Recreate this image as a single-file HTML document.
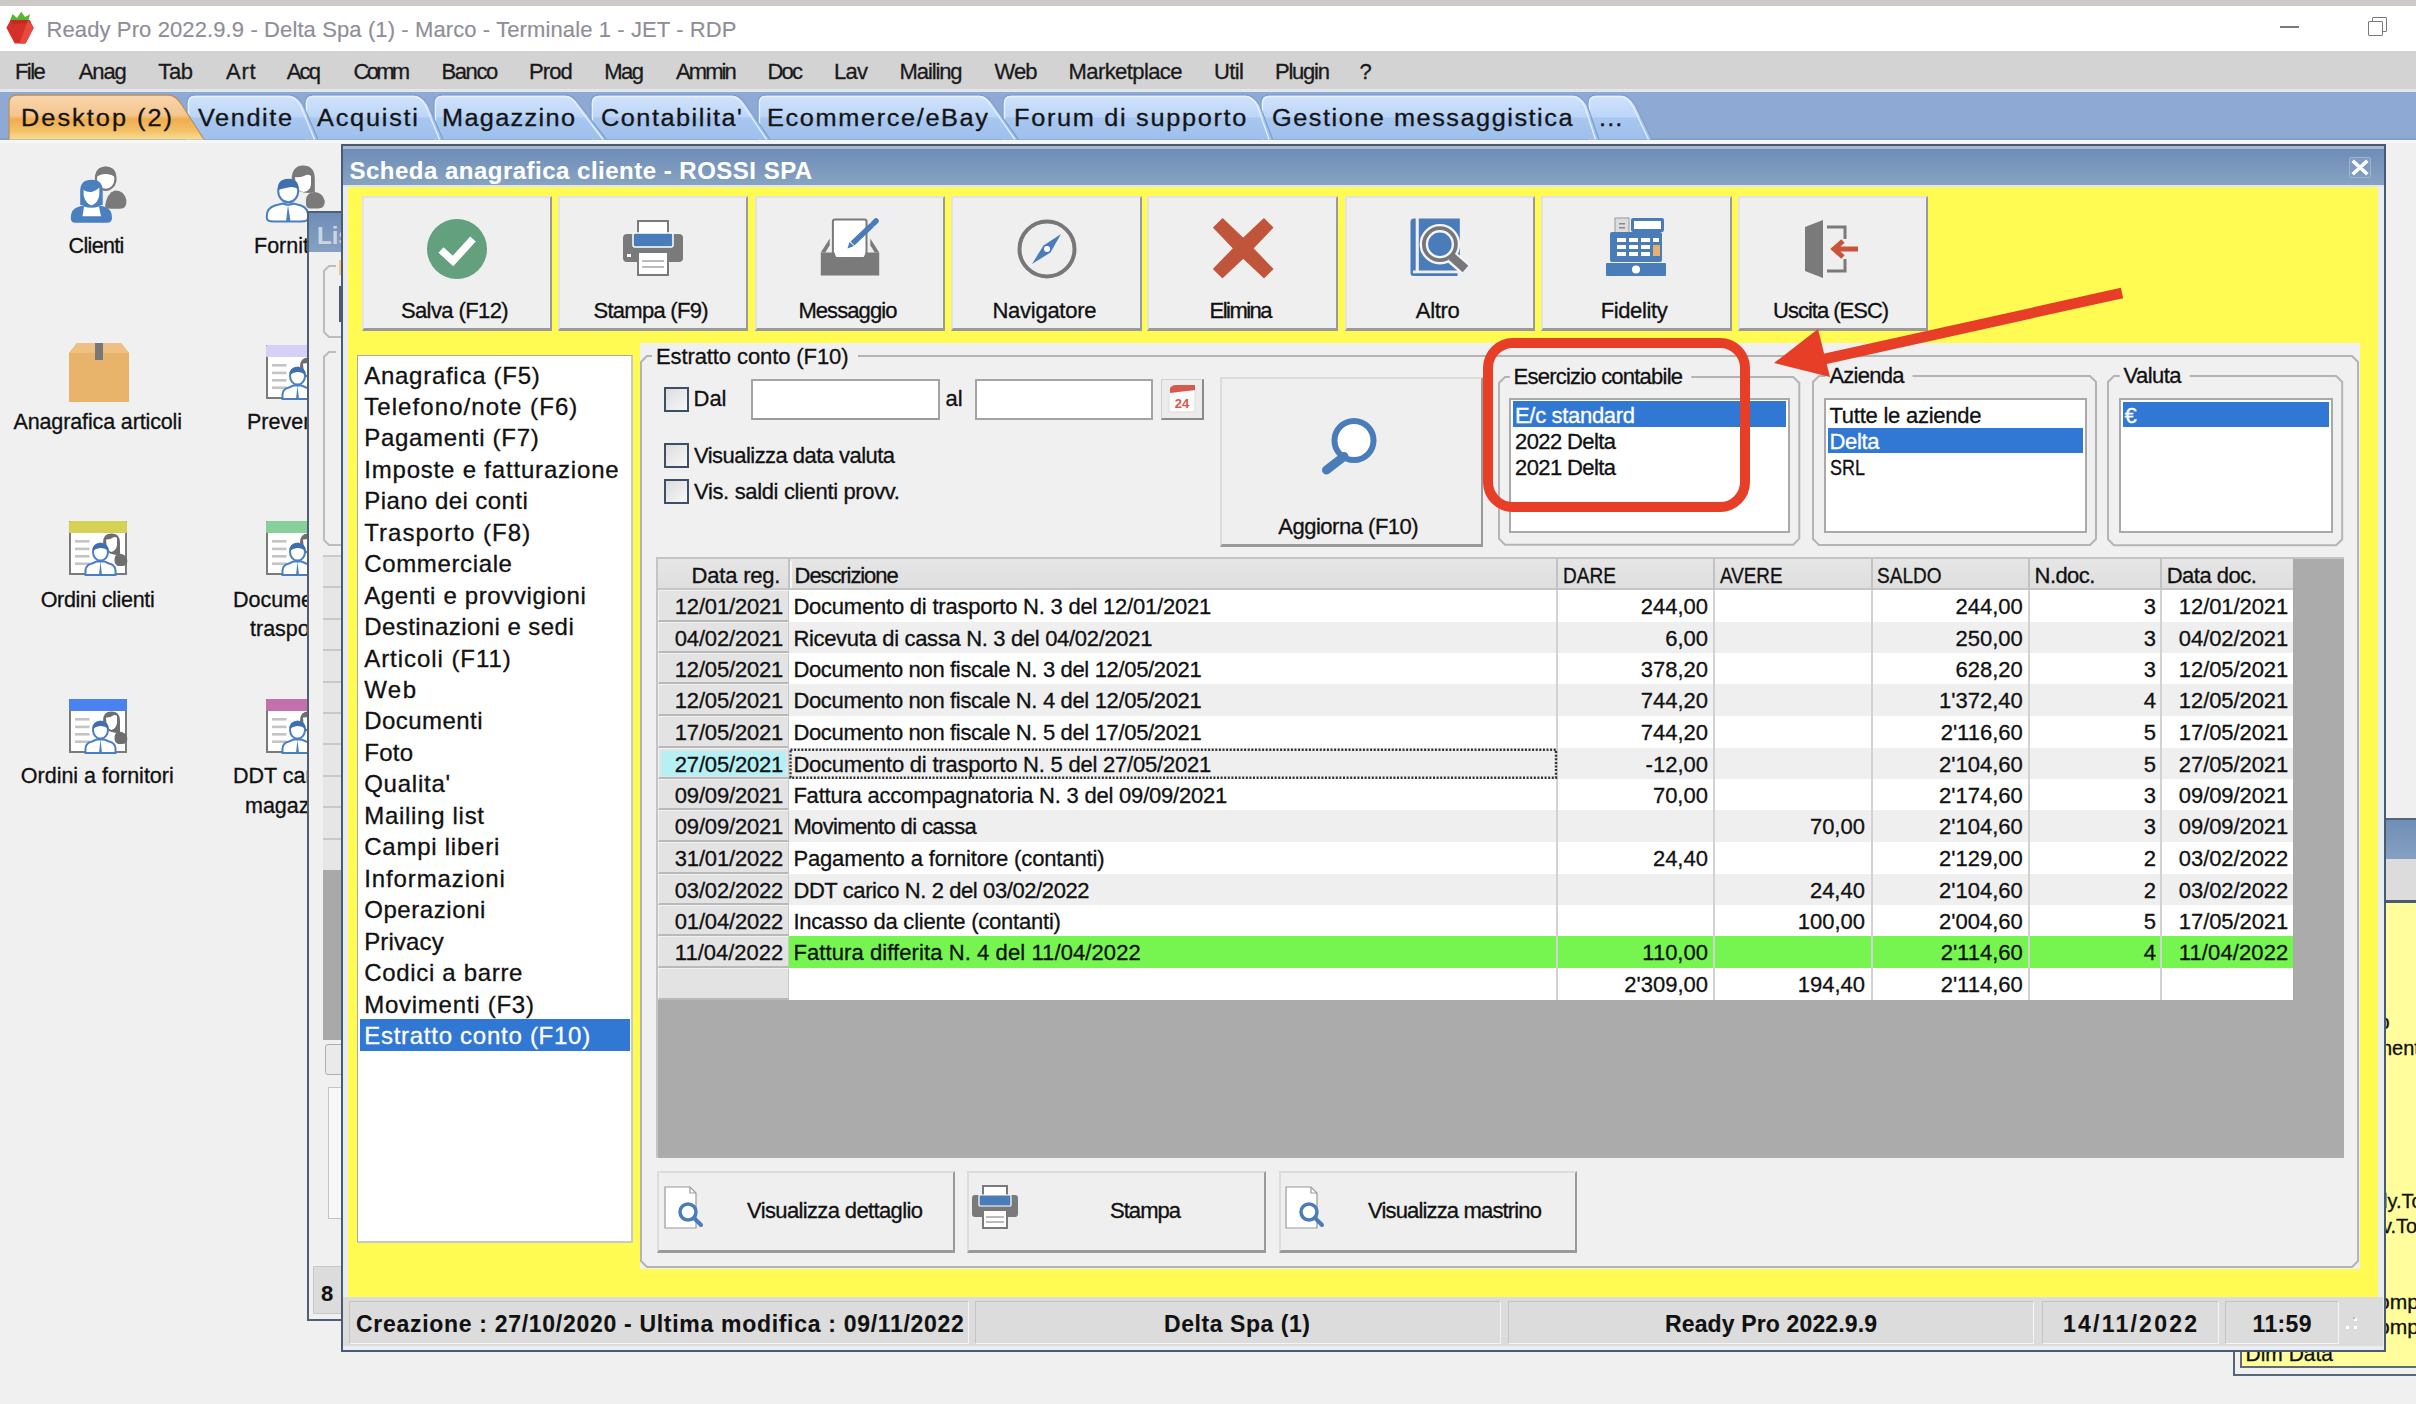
<!DOCTYPE html>
<html><head><meta charset="utf-8"><title>Ready Pro</title>
<style>
html,body{margin:0;padding:0;}
body{width:2416px;height:1404px;position:relative;overflow:hidden;background:#f0f0f0;font-family:'Liberation Sans', sans-serif;}
div{position:absolute;box-sizing:border-box;}
.t{white-space:pre;-webkit-text-stroke:0.3px currentColor;}
svg{overflow:visible;}
</style></head><body>
<div style="left:0.0px;top:0.0px;width:2416.0px;height:6.0px;background:#cdc9c6;"></div>
<div style="left:0.0px;top:6.0px;width:2416.0px;height:45.0px;background:#ffffff;"></div>
<svg style="position:absolute;left:0.0px;top:0.0px;" width="40" height="50" viewBox="0 0 40 50">
<path d="M10 20.5 L12.5 14 L17 18 L21.2 11.8 L25 17 L30 14.3 L28.5 20.5 Z" fill="#58b332"/>
<path d="M10.6 20 L29.5 20 L33.7 27.8 L25.6 43.5 L14.7 43.5 L6.4 27.8 Z" fill="#d6302a"/>
<path d="M10.6 20 L29.5 20 L31 23 L12 24 Z" fill="#c02a22"/>
<path d="M28 20 L33.7 27.8 L25.6 43.5 L19.5 43.5 Z" fill="#e84a40"/>
</svg>
<div class="t" style="left:46.5px;top:18.9px;font-size:22px;line-height:22px;color:#8e8e98;letter-spacing:0.11px;-webkit-text-stroke:0.15px currentColor;">Ready Pro 2022.9.9 - Delta Spa (1) - Marco - Terminale 1 - JET - RDP</div>
<div style="left:2280.0px;top:26.0px;width:19.0px;height:2.0px;background:#7a7a7a;"></div>
<div style="left:2372.0px;top:16.5px;width:15.0px;height:15.0px;border:1.5px solid #7a7a7a;border-radius:1px;"></div>
<div style="left:2367.5px;top:20.5px;width:15.5px;height:15.0px;border:1.5px solid #7a7a7a;background:#fff;border-radius:1px;"></div>
<div style="left:0.0px;top:51.0px;width:2416.0px;height:38.0px;background:#d3d3d3;"></div>
<div style="left:0.0px;top:89.0px;width:2416.0px;height:2.5px;background:#e2e6ee;"></div>
<div class="t" style="left:15.0px;top:60.9px;font-size:22px;line-height:22px;color:#1a1a1a;letter-spacing:-1.58px;">File</div>
<div class="t" style="left:78.8px;top:60.9px;font-size:22px;line-height:22px;color:#1a1a1a;letter-spacing:-1.13px;">Anag</div>
<div class="t" style="left:158.3px;top:60.9px;font-size:22px;line-height:22px;color:#1a1a1a;letter-spacing:-0.39px;">Tab</div>
<div class="t" style="left:226.0px;top:60.9px;font-size:22px;line-height:22px;color:#1a1a1a;letter-spacing:0.74px;">Art</div>
<div class="t" style="left:286.8px;top:60.9px;font-size:22px;line-height:22px;color:#1a1a1a;letter-spacing:-1.85px;">Acq</div>
<div class="t" style="left:353.6px;top:60.9px;font-size:22px;line-height:22px;color:#1a1a1a;letter-spacing:-2.79px;">Comm</div>
<div class="t" style="left:441.4px;top:60.9px;font-size:22px;line-height:22px;color:#1a1a1a;letter-spacing:-1.37px;">Banco</div>
<div class="t" style="left:529.0px;top:60.9px;font-size:22px;line-height:22px;color:#1a1a1a;letter-spacing:-0.89px;">Prod</div>
<div class="t" style="left:604.3px;top:60.9px;font-size:22px;line-height:22px;color:#1a1a1a;letter-spacing:-1.55px;">Mag</div>
<div class="t" style="left:676.0px;top:60.9px;font-size:22px;line-height:22px;color:#1a1a1a;letter-spacing:-1.91px;">Ammin</div>
<div class="t" style="left:767.5px;top:60.9px;font-size:22px;line-height:22px;color:#1a1a1a;letter-spacing:-1.81px;">Doc</div>
<div class="t" style="left:834.0px;top:60.9px;font-size:22px;line-height:22px;color:#1a1a1a;letter-spacing:-0.74px;">Lav</div>
<div class="t" style="left:899.6px;top:60.9px;font-size:22px;line-height:22px;color:#1a1a1a;letter-spacing:-1.12px;">Mailing</div>
<div class="t" style="left:994.6px;top:60.9px;font-size:22px;line-height:22px;color:#1a1a1a;letter-spacing:-0.97px;">Web</div>
<div class="t" style="left:1068.5px;top:60.9px;font-size:22px;line-height:22px;color:#1a1a1a;letter-spacing:-0.58px;">Marketplace</div>
<div class="t" style="left:1214.0px;top:60.9px;font-size:22px;line-height:22px;color:#1a1a1a;letter-spacing:-0.59px;">Util</div>
<div class="t" style="left:1275.0px;top:60.9px;font-size:22px;line-height:22px;color:#1a1a1a;letter-spacing:-1.23px;">Plugin</div>
<div class="t" style="left:1359.5px;top:60.9px;font-size:22px;line-height:22px;color:#1a1a1a;">?</div>
<div style="left:0.0px;top:91.5px;width:2416.0px;height:47.0px;background:#8eaad4;"></div>
<div style="left:0.0px;top:137.5px;width:2416.0px;height:2.0px;background:#7d9fd0;"></div>
<div style="left:0.0px;top:139.5px;width:2416.0px;height:3.0px;background:#f4f6fa;"></div>
<svg style="position:absolute;left:1588.0px;top:94.5px;" width="66" height="44.5" viewBox="0 0 66 44.5"><defs><linearGradient id="g1588" x1="0" y1="0" x2="0" y2="1"><stop offset="0" stop-color="#d2e3fb"/><stop offset="0.48" stop-color="#bdd6f8"/><stop offset="0.52" stop-color="#a8c7f0"/><stop offset="1" stop-color="#9ec0ec"/></linearGradient></defs><path d="M0 44.5 L0 8 Q0 0 8 0 L33.0 0 Q41.0 0 47.0 10 L64.0 44.5 Z" fill="url(#g1588)"/><path d="M0 44.5 L0 8 Q0 0 8 0 L33.0 0 Q41.0 0 47.0 10 L64.0 44.5" fill="none" stroke="#7f9fcc" stroke-width="1.3"/><path d="M1.5 44.5 L1.5 8 Q1.5 1.5 8 1.5 L33.0 1.5 Q39.0 1.5 44.5 10.5 L60.5 44.5" fill="none" stroke="#e6f0fd" stroke-width="1.3"/></svg>
<svg style="position:absolute;left:1261.0px;top:94.5px;" width="340" height="44.5" viewBox="0 0 340 44.5"><defs><linearGradient id="g1261" x1="0" y1="0" x2="0" y2="1"><stop offset="0" stop-color="#d2e3fb"/><stop offset="0.48" stop-color="#bdd6f8"/><stop offset="0.52" stop-color="#a8c7f0"/><stop offset="1" stop-color="#9ec0ec"/></linearGradient></defs><path d="M0 44.5 L0 8 Q0 0 8 0 L312.0 0 Q320.0 0 326.0 10 L338.0 44.5 Z" fill="url(#g1261)"/><path d="M0 44.5 L0 8 Q0 0 8 0 L312.0 0 Q320.0 0 326.0 10 L338.0 44.5" fill="none" stroke="#7f9fcc" stroke-width="1.3"/><path d="M1.5 44.5 L1.5 8 Q1.5 1.5 8 1.5 L312.0 1.5 Q318.0 1.5 323.5 10.5 L334.5 44.5" fill="none" stroke="#e6f0fd" stroke-width="1.3"/></svg>
<svg style="position:absolute;left:1003.4px;top:94.5px;" width="271.6" height="44.5" viewBox="0 0 271.6 44.5"><defs><linearGradient id="g1003" x1="0" y1="0" x2="0" y2="1"><stop offset="0" stop-color="#d2e3fb"/><stop offset="0.48" stop-color="#bdd6f8"/><stop offset="0.52" stop-color="#a8c7f0"/><stop offset="1" stop-color="#9ec0ec"/></linearGradient></defs><path d="M0 44.5 L0 8 Q0 0 8 0 L242.6 0 Q250.6 0 256.6 10 L269.6 44.5 Z" fill="url(#g1003)"/><path d="M0 44.5 L0 8 Q0 0 8 0 L242.6 0 Q250.6 0 256.6 10 L269.6 44.5" fill="none" stroke="#7f9fcc" stroke-width="1.3"/><path d="M1.5 44.5 L1.5 8 Q1.5 1.5 8 1.5 L242.6 1.5 Q248.6 1.5 254.1 10.5 L266.1 44.5" fill="none" stroke="#e6f0fd" stroke-width="1.3"/></svg>
<svg style="position:absolute;left:757.6px;top:94.5px;" width="262.4" height="44.5" viewBox="0 0 262.4 44.5"><defs><linearGradient id="g757" x1="0" y1="0" x2="0" y2="1"><stop offset="0" stop-color="#d2e3fb"/><stop offset="0.48" stop-color="#bdd6f8"/><stop offset="0.52" stop-color="#a8c7f0"/><stop offset="1" stop-color="#9ec0ec"/></linearGradient></defs><path d="M0 44.5 L0 8 Q0 0 8 0 L221.4 0 Q229.4 0 235.4 10 L260.4 44.5 Z" fill="url(#g757)"/><path d="M0 44.5 L0 8 Q0 0 8 0 L221.4 0 Q229.4 0 235.4 10 L260.4 44.5" fill="none" stroke="#7f9fcc" stroke-width="1.3"/><path d="M1.5 44.5 L1.5 8 Q1.5 1.5 8 1.5 L221.4 1.5 Q227.4 1.5 232.9 10.5 L256.9 44.5" fill="none" stroke="#e6f0fd" stroke-width="1.3"/></svg>
<svg style="position:absolute;left:591.0px;top:94.5px;" width="181" height="44.5" viewBox="0 0 181 44.5"><defs><linearGradient id="g591" x1="0" y1="0" x2="0" y2="1"><stop offset="0" stop-color="#d2e3fb"/><stop offset="0.48" stop-color="#bdd6f8"/><stop offset="0.52" stop-color="#a8c7f0"/><stop offset="1" stop-color="#9ec0ec"/></linearGradient></defs><path d="M0 44.5 L0 8 Q0 0 8 0 L141.0 0 Q149.0 0 155.0 10 L179.0 44.5 Z" fill="url(#g591)"/><path d="M0 44.5 L0 8 Q0 0 8 0 L141.0 0 Q149.0 0 155.0 10 L179.0 44.5" fill="none" stroke="#7f9fcc" stroke-width="1.3"/><path d="M1.5 44.5 L1.5 8 Q1.5 1.5 8 1.5 L141.0 1.5 Q147.0 1.5 152.5 10.5 L175.5 44.5" fill="none" stroke="#e6f0fd" stroke-width="1.3"/></svg>
<svg style="position:absolute;left:433.5px;top:94.5px;" width="174.5" height="44.5" viewBox="0 0 174.5 44.5"><defs><linearGradient id="g433" x1="0" y1="0" x2="0" y2="1"><stop offset="0" stop-color="#d2e3fb"/><stop offset="0.48" stop-color="#bdd6f8"/><stop offset="0.52" stop-color="#a8c7f0"/><stop offset="1" stop-color="#9ec0ec"/></linearGradient></defs><path d="M0 44.5 L0 8 Q0 0 8 0 L131.5 0 Q139.5 0 145.5 10 L172.5 44.5 Z" fill="url(#g433)"/><path d="M0 44.5 L0 8 Q0 0 8 0 L131.5 0 Q139.5 0 145.5 10 L172.5 44.5" fill="none" stroke="#7f9fcc" stroke-width="1.3"/><path d="M1.5 44.5 L1.5 8 Q1.5 1.5 8 1.5 L131.5 1.5 Q137.5 1.5 143.0 10.5 L169.0 44.5" fill="none" stroke="#e6f0fd" stroke-width="1.3"/></svg>
<svg style="position:absolute;left:305.0px;top:94.5px;" width="140" height="44.5" viewBox="0 0 140 44.5"><defs><linearGradient id="g305" x1="0" y1="0" x2="0" y2="1"><stop offset="0" stop-color="#d2e3fb"/><stop offset="0.48" stop-color="#bdd6f8"/><stop offset="0.52" stop-color="#a8c7f0"/><stop offset="1" stop-color="#9ec0ec"/></linearGradient></defs><path d="M0 44.5 L0 8 Q0 0 8 0 L109.0 0 Q117.0 0 123.0 10 L138.0 44.5 Z" fill="url(#g305)"/><path d="M0 44.5 L0 8 Q0 0 8 0 L109.0 0 Q117.0 0 123.0 10 L138.0 44.5" fill="none" stroke="#7f9fcc" stroke-width="1.3"/><path d="M1.5 44.5 L1.5 8 Q1.5 1.5 8 1.5 L109.0 1.5 Q115.0 1.5 120.5 10.5 L134.5 44.5" fill="none" stroke="#e6f0fd" stroke-width="1.3"/></svg>
<svg style="position:absolute;left:187.0px;top:94.5px;" width="133" height="44.5" viewBox="0 0 133 44.5"><defs><linearGradient id="g187" x1="0" y1="0" x2="0" y2="1"><stop offset="0" stop-color="#d2e3fb"/><stop offset="0.48" stop-color="#bdd6f8"/><stop offset="0.52" stop-color="#a8c7f0"/><stop offset="1" stop-color="#9ec0ec"/></linearGradient></defs><path d="M0 44.5 L0 8 Q0 0 8 0 L102.0 0 Q110.0 0 116.0 10 L131.0 44.5 Z" fill="url(#g187)"/><path d="M0 44.5 L0 8 Q0 0 8 0 L102.0 0 Q110.0 0 116.0 10 L131.0 44.5" fill="none" stroke="#7f9fcc" stroke-width="1.3"/><path d="M1.5 44.5 L1.5 8 Q1.5 1.5 8 1.5 L102.0 1.5 Q108.0 1.5 113.5 10.5 L127.5 44.5" fill="none" stroke="#e6f0fd" stroke-width="1.3"/></svg>
<svg style="position:absolute;left:9.0px;top:94.5px;" width="197" height="44.5" viewBox="0 0 197 44.5"><defs><linearGradient id="g9" x1="0" y1="0" x2="0" y2="1"><stop offset="0" stop-color="#f8d6ac"/><stop offset="0.45" stop-color="#f5c690"/><stop offset="0.55" stop-color="#f0ad50"/><stop offset="0.8" stop-color="#f3c068"/><stop offset="1" stop-color="#f9dd90"/></linearGradient></defs><path d="M0 44.5 L0 8 Q0 0 8 0 L159.0 0 Q167.0 0 173.0 10 L195.0 44.5 Z" fill="url(#g9)"/><path d="M0 44.5 L0 8 Q0 0 8 0 L159.0 0 Q167.0 0 173.0 10 L195.0 44.5" fill="none" stroke="#b89060" stroke-width="1.3"/></svg>
<div class="t" style="left:21.0px;top:107.0px;font-size:23px;line-height:23px;color:#141414;letter-spacing:1.84px;transform:scaleX(1.1000);transform-origin:0 0;">Desktop (2)</div>
<div class="t" style="left:198.0px;top:107.0px;font-size:23px;line-height:23px;color:#141414;letter-spacing:1.45px;transform:scaleX(1.1000);transform-origin:0 0;">Vendite</div>
<div class="t" style="left:317.0px;top:107.0px;font-size:23px;line-height:23px;color:#141414;letter-spacing:1.61px;transform:scaleX(1.1000);transform-origin:0 0;">Acquisti</div>
<div class="t" style="left:442.0px;top:107.0px;font-size:23px;line-height:23px;color:#141414;letter-spacing:1.21px;transform:scaleX(1.1000);transform-origin:0 0;">Magazzino</div>
<div class="t" style="left:601.0px;top:107.0px;font-size:23px;line-height:23px;color:#141414;letter-spacing:1.37px;transform:scaleX(1.1000);transform-origin:0 0;">Contabilita'</div>
<div class="t" style="left:767.0px;top:107.0px;font-size:23px;line-height:23px;color:#141414;letter-spacing:1.49px;transform:scaleX(1.1000);transform-origin:0 0;">Ecommerce/eBay</div>
<div class="t" style="left:1013.6px;top:107.0px;font-size:23px;line-height:23px;color:#141414;letter-spacing:1.54px;transform:scaleX(1.1000);transform-origin:0 0;">Forum di supporto</div>
<div class="t" style="left:1271.5px;top:107.0px;font-size:23px;line-height:23px;color:#141414;letter-spacing:1.38px;transform:scaleX(1.1000);transform-origin:0 0;">Gestione messaggistica</div>
<div class="t" style="left:1598.7px;top:107.0px;font-size:23px;line-height:23px;color:#141414;letter-spacing:1.01px;transform:scaleX(1.1000);transform-origin:0 0;">...</div>
<svg style="position:absolute;left:70.0px;top:166.0px;" width="60" height="58" viewBox="0 0 60 58">
<path d="M35 40 Q37 27 45 24.6 Q54 24.6 56.4 34 Q57 42.8 50 42.8 L40 42.8 Q35 42.5 35 40Z" fill="#7a7a7a"/>
<ellipse cx="35.7" cy="12.7" rx="9.8" ry="11.2" fill="#fff" stroke="#7a7a7a" stroke-width="2.2"/>
<path d="M25.5 11.5 Q25 0.8 35.7 0.8 Q46.5 0.8 46 11.5 Q41 7.5 35.7 8 Q30 8 25.5 11.5Z" fill="#7a7a7a"/>
<path d="M0.8 52 Q0.8 43 8 41 L14 39 L29 39 L35 41 Q42 43 42 52 Q42 56.8 37 56.8 L5 56.8 Q0.8 56.8 0.8 52Z" fill="#4a7fc0"/>
<path d="M10.2 38 L10.2 25 Q10.2 13.8 21.5 13.8 Q32.7 13.8 32.7 25 L32.7 39 L10.2 39Z" fill="#4a7fc0"/>
<path d="M13.6 24 Q18 27 23 25.5 Q27 24 29.3 21.5 L29.3 29 Q28 37 21.5 39.5 Q15 37 13.6 29Z" fill="#fff"/>
<path d="M14 40.5 Q21.5 43 29 40.5 L31 50.3 L12.5 50.3Z" fill="#fff"/>
</svg>
<svg style="position:absolute;left:265.0px;top:165.0px;" width="60" height="58" viewBox="0 0 60 58">
<path d="M41 39 Q40 30 46 27.5 L50 27 Q58 28 59.8 36 Q60 43.6 53 43.6 L45 43.6 Q41 43 41 39Z" fill="#7a7a7a"/>
<path d="M26.5 16 Q26.5 0.5 38 0.5 Q49.8 0.5 49.8 14 L49.8 27 L44 28 Q38 28 34 26 L32 24 Z" fill="#7a7a7a"/>
<path d="M30 12 Q36 13 40 10.5 Q43 9 46 11 L46 20 Q45 26 38.5 27 Q33 26 31 21Z" fill="#fff"/>
<path d="M1.8 51 Q1.8 43 10 40.5 L18 38.5 Q23 41 28.5 38.5 L36 40.5 Q43.1 43 43.1 51 L43.1 53 Q43 56.5 36 56.5 L9 56.5 Q1.8 56.5 1.8 53Z" fill="#fff" stroke="#4a7fc0" stroke-width="2"/>
<ellipse cx="23.2" cy="26" rx="10" ry="11.3" fill="#fff" stroke="#4a7fc0" stroke-width="2"/>
<path d="M13 25 Q12 13.9 23.2 13.9 Q34 13.9 33.5 24 Q28 21 23 22.5 Q17 23.5 13 25Z" fill="#3f6fb0"/>
<path d="M23 40 L21 56.5 L25.5 56.5 Z" fill="#4a7fc0"/>
</svg>
<div class="t" style="left:68.6px;top:236.1px;font-size:21.5px;line-height:21.5px;color:#111;letter-spacing:-0.66px;">Clienti</div>
<div class="t" style="left:254.0px;top:236.1px;font-size:21.5px;line-height:21.5px;color:#111;">Fornitori</div>
<svg style="position:absolute;left:69.0px;top:343.0px;" width="60" height="59" viewBox="0 0 60 59">
<path d="M0 10 L8 0 L52 0 L60 10 L60 59 L0 59 Z" fill="#e8b46c"/>
<path d="M0 10 L8 0 L52 0 L60 10 Z" fill="#eec083"/>
<rect x="26" y="0" width="8" height="17" fill="#777"/>
</svg>
<svg style="position:absolute;left:265.7px;top:345.0px;" width="58" height="54" viewBox="0 0 58 54">
<rect x="1" y="1" width="56" height="52" fill="#fff" stroke="#7a7a7a" stroke-width="2"/>
<rect x="0" y="0" width="58" height="12" rx="1.5" fill="#d4d0f7"/>
<rect x="6" y="19" width="14.5" height="2.6" fill="#c4c4c4"/>
<rect x="6" y="26.6" width="14.5" height="2.6" fill="#c4c4c4"/>
<rect x="6" y="34" width="14.5" height="2.6" fill="#c4c4c4"/>
<rect x="6" y="41.4" width="14.5" height="2.6" fill="#c4c4c4"/>
<path d="M45.5 40 Q45 33.5 50 32.5 Q58 33 58.4 40 Q58 45 53 45 L49 45 Q46 44 45.5 40Z" fill="#6e6e6e"/>
<path d="M34 22 Q34 12.6 42.5 12.6 Q51 12.6 51 22 L51 33 L47 34 Q41 33 38 31 Z" fill="#6e6e6e"/>
<path d="M37 18.5 Q41 19 44 16.5 Q46 15.5 48 17 L48 24 Q47 30 42 31 Q38 29 37.5 24Z" fill="#fff"/>
<path d="M16.5 54 L16.5 49 Q17 44 23 42.5 L27.5 40.5 L35.5 40.5 L40 42.5 Q46 44 46.5 49 L46.5 54 Z" fill="#fff" stroke="#4a7fc0" stroke-width="2"/>
<ellipse cx="31.5" cy="31" rx="7.5" ry="8.6" fill="#fff" stroke="#4a7fc0" stroke-width="2"/>
<path d="M23.5 30 Q23 22.3 31.5 22.3 Q40 22.3 39.5 30 Q35.5 26.5 31 27 Q27 27.5 23.5 30Z" fill="#3f6fb0"/>
<path d="M31.5 40.5 L30 54 L33 54Z" fill="#4a7fc0"/>
</svg>
<div class="t" style="left:13.5px;top:411.8px;font-size:21.5px;line-height:21.5px;color:#111;letter-spacing:-0.13px;">Anagrafica articoli</div>
<div class="t" style="left:247.0px;top:411.8px;font-size:21.5px;line-height:21.5px;color:#111;">Preventivi</div>
<svg style="position:absolute;left:69.4px;top:521.4px;" width="58" height="54" viewBox="0 0 58 54">
<rect x="1" y="1" width="56" height="52" fill="#fff" stroke="#7a7a7a" stroke-width="2"/>
<rect x="0" y="0" width="58" height="12" rx="1.5" fill="#d5d154"/>
<rect x="6" y="19" width="14.5" height="2.6" fill="#c4c4c4"/>
<rect x="6" y="26.6" width="14.5" height="2.6" fill="#c4c4c4"/>
<rect x="6" y="34" width="14.5" height="2.6" fill="#c4c4c4"/>
<rect x="6" y="41.4" width="14.5" height="2.6" fill="#c4c4c4"/>
<path d="M45.5 40 Q45 33.5 50 32.5 Q58 33 58.4 40 Q58 45 53 45 L49 45 Q46 44 45.5 40Z" fill="#6e6e6e"/>
<path d="M34 22 Q34 12.6 42.5 12.6 Q51 12.6 51 22 L51 33 L47 34 Q41 33 38 31 Z" fill="#6e6e6e"/>
<path d="M37 18.5 Q41 19 44 16.5 Q46 15.5 48 17 L48 24 Q47 30 42 31 Q38 29 37.5 24Z" fill="#fff"/>
<path d="M16.5 54 L16.5 49 Q17 44 23 42.5 L27.5 40.5 L35.5 40.5 L40 42.5 Q46 44 46.5 49 L46.5 54 Z" fill="#fff" stroke="#4a7fc0" stroke-width="2"/>
<ellipse cx="31.5" cy="31" rx="7.5" ry="8.6" fill="#fff" stroke="#4a7fc0" stroke-width="2"/>
<path d="M23.5 30 Q23 22.3 31.5 22.3 Q40 22.3 39.5 30 Q35.5 26.5 31 27 Q27 27.5 23.5 30Z" fill="#3f6fb0"/>
<path d="M31.5 40.5 L30 54 L33 54Z" fill="#4a7fc0"/>
</svg>
<svg style="position:absolute;left:265.7px;top:521.4px;" width="58" height="54" viewBox="0 0 58 54">
<rect x="1" y="1" width="56" height="52" fill="#fff" stroke="#7a7a7a" stroke-width="2"/>
<rect x="0" y="0" width="58" height="12" rx="1.5" fill="#89cf9c"/>
<rect x="6" y="19" width="14.5" height="2.6" fill="#c4c4c4"/>
<rect x="6" y="26.6" width="14.5" height="2.6" fill="#c4c4c4"/>
<rect x="6" y="34" width="14.5" height="2.6" fill="#c4c4c4"/>
<rect x="6" y="41.4" width="14.5" height="2.6" fill="#c4c4c4"/>
<path d="M45.5 40 Q45 33.5 50 32.5 Q58 33 58.4 40 Q58 45 53 45 L49 45 Q46 44 45.5 40Z" fill="#6e6e6e"/>
<path d="M34 22 Q34 12.6 42.5 12.6 Q51 12.6 51 22 L51 33 L47 34 Q41 33 38 31 Z" fill="#6e6e6e"/>
<path d="M37 18.5 Q41 19 44 16.5 Q46 15.5 48 17 L48 24 Q47 30 42 31 Q38 29 37.5 24Z" fill="#fff"/>
<path d="M16.5 54 L16.5 49 Q17 44 23 42.5 L27.5 40.5 L35.5 40.5 L40 42.5 Q46 44 46.5 49 L46.5 54 Z" fill="#fff" stroke="#4a7fc0" stroke-width="2"/>
<ellipse cx="31.5" cy="31" rx="7.5" ry="8.6" fill="#fff" stroke="#4a7fc0" stroke-width="2"/>
<path d="M23.5 30 Q23 22.3 31.5 22.3 Q40 22.3 39.5 30 Q35.5 26.5 31 27 Q27 27.5 23.5 30Z" fill="#3f6fb0"/>
<path d="M31.5 40.5 L30 54 L33 54Z" fill="#4a7fc0"/>
</svg>
<div class="t" style="left:40.7px;top:589.5px;font-size:21.5px;line-height:21.5px;color:#111;letter-spacing:-0.33px;">Ordini clienti</div>
<div class="t" style="left:233.0px;top:589.5px;font-size:21.5px;line-height:21.5px;color:#111;">Documenti di</div>
<div class="t" style="left:250.0px;top:619.4px;font-size:21.5px;line-height:21.5px;color:#111;">trasporto</div>
<svg style="position:absolute;left:69.4px;top:698.5px;" width="58" height="54" viewBox="0 0 58 54">
<rect x="1" y="1" width="56" height="52" fill="#fff" stroke="#7a7a7a" stroke-width="2"/>
<rect x="0" y="0" width="58" height="12" rx="1.5" fill="#4a82ef"/>
<rect x="6" y="19" width="14.5" height="2.6" fill="#c4c4c4"/>
<rect x="6" y="26.6" width="14.5" height="2.6" fill="#c4c4c4"/>
<rect x="6" y="34" width="14.5" height="2.6" fill="#c4c4c4"/>
<rect x="6" y="41.4" width="14.5" height="2.6" fill="#c4c4c4"/>
<path d="M45.5 40 Q45 33.5 50 32.5 Q58 33 58.4 40 Q58 45 53 45 L49 45 Q46 44 45.5 40Z" fill="#6e6e6e"/>
<path d="M34 22 Q34 12.6 42.5 12.6 Q51 12.6 51 22 L51 33 L47 34 Q41 33 38 31 Z" fill="#6e6e6e"/>
<path d="M37 18.5 Q41 19 44 16.5 Q46 15.5 48 17 L48 24 Q47 30 42 31 Q38 29 37.5 24Z" fill="#fff"/>
<path d="M16.5 54 L16.5 49 Q17 44 23 42.5 L27.5 40.5 L35.5 40.5 L40 42.5 Q46 44 46.5 49 L46.5 54 Z" fill="#fff" stroke="#4a7fc0" stroke-width="2"/>
<ellipse cx="31.5" cy="31" rx="7.5" ry="8.6" fill="#fff" stroke="#4a7fc0" stroke-width="2"/>
<path d="M23.5 30 Q23 22.3 31.5 22.3 Q40 22.3 39.5 30 Q35.5 26.5 31 27 Q27 27.5 23.5 30Z" fill="#3f6fb0"/>
<path d="M31.5 40.5 L30 54 L33 54Z" fill="#4a7fc0"/>
</svg>
<svg style="position:absolute;left:265.7px;top:698.5px;" width="58" height="54" viewBox="0 0 58 54">
<rect x="1" y="1" width="56" height="52" fill="#fff" stroke="#7a7a7a" stroke-width="2"/>
<rect x="0" y="0" width="58" height="12" rx="1.5" fill="#c271aa"/>
<rect x="6" y="19" width="14.5" height="2.6" fill="#c4c4c4"/>
<rect x="6" y="26.6" width="14.5" height="2.6" fill="#c4c4c4"/>
<rect x="6" y="34" width="14.5" height="2.6" fill="#c4c4c4"/>
<rect x="6" y="41.4" width="14.5" height="2.6" fill="#c4c4c4"/>
<path d="M45.5 40 Q45 33.5 50 32.5 Q58 33 58.4 40 Q58 45 53 45 L49 45 Q46 44 45.5 40Z" fill="#6e6e6e"/>
<path d="M34 22 Q34 12.6 42.5 12.6 Q51 12.6 51 22 L51 33 L47 34 Q41 33 38 31 Z" fill="#6e6e6e"/>
<path d="M37 18.5 Q41 19 44 16.5 Q46 15.5 48 17 L48 24 Q47 30 42 31 Q38 29 37.5 24Z" fill="#fff"/>
<path d="M16.5 54 L16.5 49 Q17 44 23 42.5 L27.5 40.5 L35.5 40.5 L40 42.5 Q46 44 46.5 49 L46.5 54 Z" fill="#fff" stroke="#4a7fc0" stroke-width="2"/>
<ellipse cx="31.5" cy="31" rx="7.5" ry="8.6" fill="#fff" stroke="#4a7fc0" stroke-width="2"/>
<path d="M23.5 30 Q23 22.3 31.5 22.3 Q40 22.3 39.5 30 Q35.5 26.5 31 27 Q27 27.5 23.5 30Z" fill="#3f6fb0"/>
<path d="M31.5 40.5 L30 54 L33 54Z" fill="#4a7fc0"/>
</svg>
<div class="t" style="left:20.8px;top:765.8px;font-size:21.5px;line-height:21.5px;color:#111;">Ordini a fornitori</div>
<div class="t" style="left:233.0px;top:765.8px;font-size:21.5px;line-height:21.5px;color:#111;">DDT carico</div>
<div class="t" style="left:245.0px;top:795.8px;font-size:21.5px;line-height:21.5px;color:#111;">magazzino</div>
<div style="left:307.0px;top:211.0px;width:300.0px;height:1110.0px;background:#f0f0f0;border:2px solid #4f5f74;"></div>
<div style="left:309.0px;top:213.0px;width:298.0px;height:39.0px;background:linear-gradient(#6f8db6,#86a0c1);"></div>
<div class="t" style="left:317.0px;top:223.7px;font-size:24px;line-height:24px;color:#ccd5e2;font-weight:700;-webkit-text-stroke:0.1px currentColor;">Listino</div>
<svg style="position:absolute;left:322.0px;top:264.0px;" width="30" height="76" viewBox="0 0 30 76"><path d="M14 2 L7 2 L2 7 L2 68 L7 73 L30 73" fill="none" stroke="#bcbcbc" stroke-width="2"/></svg>
<div style="left:338.6px;top:260.0px;width:2.2px;height:15.0px;background:#f2c878;"></div>
<div style="left:338.6px;top:286.0px;width:2.6px;height:36.0px;background:#505a68;"></div>
<svg style="position:absolute;left:322.0px;top:350.0px;" width="30" height="200" viewBox="0 0 30 200"><path d="M14 2 L7 2 L2 7 L2 190 L7 195 L30 195" fill="none" stroke="#bcbcbc" stroke-width="2"/></svg>
<div style="left:323.0px;top:555.0px;width:40.0px;height:315.0px;background:#e6e6e6;"></div>
<div style="left:323.0px;top:555.0px;width:40.0px;height:2.0px;background:#c9c9c9;"></div>
<div style="left:323.0px;top:586.4px;width:40.0px;height:2.0px;background:#c9c9c9;"></div>
<div style="left:323.0px;top:617.8px;width:40.0px;height:2.0px;background:#c9c9c9;"></div>
<div style="left:323.0px;top:649.2px;width:40.0px;height:2.0px;background:#c9c9c9;"></div>
<div style="left:323.0px;top:680.6px;width:40.0px;height:2.0px;background:#c9c9c9;"></div>
<div style="left:323.0px;top:712.0px;width:40.0px;height:2.0px;background:#c9c9c9;"></div>
<div style="left:323.0px;top:743.4px;width:40.0px;height:2.0px;background:#c9c9c9;"></div>
<div style="left:323.0px;top:774.8px;width:40.0px;height:2.0px;background:#c9c9c9;"></div>
<div style="left:323.0px;top:806.2px;width:40.0px;height:2.0px;background:#c9c9c9;"></div>
<div style="left:323.0px;top:837.6px;width:40.0px;height:2.0px;background:#c9c9c9;"></div>
<div style="left:323.0px;top:870.0px;width:40.0px;height:170.0px;background:#a9a9a9;"></div>
<div style="left:325.0px;top:1044.0px;width:30.0px;height:31.0px;background:#eaeaea;border:1.5px solid #b0b0b0;border-radius:3px;"></div>
<div style="left:328.0px;top:1087.0px;width:40.0px;height:132.0px;background:#f7f7f7;border:1.5px solid #c4c4c4;"></div>
<div style="left:313.0px;top:1266.0px;width:60.0px;height:48.0px;background:#dcdcdc;border:1px solid #c8c8c8;"></div>
<div class="t" style="left:321.0px;top:1283.4px;font-size:22px;line-height:22px;color:#111;font-weight:700;-webkit-text-stroke:0.1px currentColor;">8</div>
<div style="left:2233.0px;top:818.0px;width:300.0px;height:558.0px;background:#f0f0f0;border:2px solid #55657a;"></div>
<div style="left:2235.0px;top:820.0px;width:300.0px;height:39.0px;background:linear-gradient(#6f8db6,#86a0c1);"></div>
<div style="left:2235.0px;top:859.0px;width:300.0px;height:42.0px;background:#dcdcdc;"></div>
<div style="left:2235.0px;top:900.0px;width:300.0px;height:3.0px;background:#4a5a70;"></div>
<div style="left:2240.0px;top:903.0px;width:300.0px;height:465.0px;background:#fffd9c;border-left:2px solid #606a78;border-bottom:2px solid #606a78;"></div>
<div class="t" style="left:2378.5px;top:1012.1px;font-size:20px;line-height:20px;color:#111;">o</div>
<div class="t" style="left:2381.0px;top:1037.6px;font-size:20px;line-height:20px;color:#111;">nenti</div>
<div class="t" style="left:2383.0px;top:1191.1px;font-size:20px;line-height:20px;color:#111;">ly.Tot</div>
<div class="t" style="left:2382.0px;top:1216.1px;font-size:20px;line-height:20px;color:#111;">v.Tot</div>
<div class="t" style="left:2378.0px;top:1291.2px;font-size:21px;line-height:21px;color:#111;">ompl</div>
<div class="t" style="left:2378.0px;top:1316.2px;font-size:21px;line-height:21px;color:#111;">ompl</div>
<div class="t" style="left:2245.5px;top:1343.2px;font-size:21px;line-height:21px;color:#111;">Dim Data</div>
<div style="left:341.0px;top:144.0px;width:2044.5px;height:1208.0px;background:#e9edf2;border:2px solid #4a5a70;"></div>
<div style="left:343.0px;top:146.0px;width:2040.5px;height:2.5px;background:#a6b8d0;"></div>
<div style="left:343.0px;top:148.5px;width:2040.5px;height:36.5px;background:linear-gradient(#6e8db7,#87a2c2);"></div>
<div style="left:343.0px;top:185.0px;width:2040.5px;height:2.0px;background:#dfe6ef;"></div>
<div class="t" style="left:349.5px;top:158.7px;font-size:24px;line-height:24px;color:#ffffff;font-weight:700;-webkit-text-stroke:0.1px currentColor;letter-spacing:0.49px;">Scheda anagrafica cliente - ROSSI SPA</div>
<div style="left:2348.5px;top:156.5px;width:22.5px;height:21.5px;background:#7f9cc0;border:1px solid #9db3d0;border-radius:2px;"></div>
<svg style="position:absolute;left:2352.0px;top:160.0px;" width="16" height="15" viewBox="0 0 16 15"><path d="M2 2 L14 13 M14 2 L2 13" stroke="#fff" stroke-width="3.6" stroke-linecap="square"/></svg>
<div style="left:348.0px;top:187.0px;width:2030.0px;height:1110.0px;background:#fffb52;"></div>
<div style="left:361.5px;top:195.5px;width:190.5px;height:135.0px;background:#efefef;border-top:2px solid #e2e2e8;border-left:2px solid #e2e2e8;border-right:2.5px solid #9a9a9a;border-bottom:3px solid #9a9a9a;"></div>
<div class="t" style="left:400.9px;top:299.9px;font-size:22px;line-height:22px;color:#111;letter-spacing:-0.60px;">Salva (F12)</div>
<div style="left:558.0px;top:195.5px;width:190.0px;height:135.0px;background:#efefef;border-top:2px solid #e2e2e8;border-left:2px solid #e2e2e8;border-right:2.5px solid #9a9a9a;border-bottom:3px solid #9a9a9a;"></div>
<div class="t" style="left:593.5px;top:299.9px;font-size:22px;line-height:22px;color:#111;letter-spacing:-0.73px;">Stampa (F9)</div>
<div style="left:754.7px;top:195.5px;width:190.3px;height:135.0px;background:#efefef;border-top:2px solid #e2e2e8;border-left:2px solid #e2e2e8;border-right:2.5px solid #9a9a9a;border-bottom:3px solid #9a9a9a;"></div>
<div class="t" style="left:798.4px;top:299.9px;font-size:22px;line-height:22px;color:#111;letter-spacing:-0.92px;">Messaggio</div>
<div style="left:951.0px;top:195.5px;width:191.0px;height:135.0px;background:#efefef;border-top:2px solid #e2e2e8;border-left:2px solid #e2e2e8;border-right:2.5px solid #9a9a9a;border-bottom:3px solid #9a9a9a;"></div>
<div class="t" style="left:992.5px;top:299.9px;font-size:22px;line-height:22px;color:#111;letter-spacing:-0.27px;">Navigatore</div>
<div style="left:1147.4px;top:195.5px;width:191.1px;height:135.0px;background:#efefef;border-top:2px solid #e2e2e8;border-left:2px solid #e2e2e8;border-right:2.5px solid #9a9a9a;border-bottom:3px solid #9a9a9a;"></div>
<div class="t" style="left:1209.5px;top:299.9px;font-size:22px;line-height:22px;color:#111;letter-spacing:-1.52px;">Elimina</div>
<div style="left:1344.5px;top:195.5px;width:190.5px;height:135.0px;background:#efefef;border-top:2px solid #e2e2e8;border-left:2px solid #e2e2e8;border-right:2.5px solid #9a9a9a;border-bottom:3px solid #9a9a9a;"></div>
<div class="t" style="left:1415.8px;top:299.9px;font-size:22px;line-height:22px;color:#111;letter-spacing:-0.31px;">Altro</div>
<div style="left:1540.6px;top:195.5px;width:191.1px;height:135.0px;background:#efefef;border-top:2px solid #e2e2e8;border-left:2px solid #e2e2e8;border-right:2.5px solid #9a9a9a;border-bottom:3px solid #9a9a9a;"></div>
<div class="t" style="left:1600.7px;top:299.9px;font-size:22px;line-height:22px;color:#111;letter-spacing:-0.38px;">Fidelity</div>
<div style="left:1737.7px;top:195.5px;width:190.8px;height:135.0px;background:#efefef;border-top:2px solid #e2e2e8;border-left:2px solid #e2e2e8;border-right:2.5px solid #9a9a9a;border-bottom:3px solid #9a9a9a;"></div>
<div class="t" style="left:1773.1px;top:299.9px;font-size:22px;line-height:22px;color:#111;letter-spacing:-1.01px;">Uscita (ESC)</div>
<svg style="position:absolute;left:426.5px;top:218.5px;" width="60" height="60" viewBox="0 0 60 60"><circle cx="30" cy="30" r="30" fill="#62a07e"/><path d="M14 31 L26 42 L46 20" fill="none" stroke="#fff" stroke-width="7.5"/></svg>
<svg style="position:absolute;left:623.0px;top:220.0px;" width="60" height="56" viewBox="0 0 60 56">
<rect x="15" y="1" width="30" height="15" fill="#fff" stroke="#7a7a7a" stroke-width="2"/>
<rect x="0" y="14" width="60" height="28" rx="4" fill="#7a7a7a"/>
<rect x="10" y="13" width="40" height="14" rx="2" fill="#4b7cba" stroke="#fff" stroke-width="1.5"/>
<rect x="15" y="32" width="30" height="23" fill="#fff" stroke="#7a7a7a" stroke-width="2"/>
<rect x="19" y="40" width="22" height="2" fill="#bbb"/><rect x="19" y="46" width="22" height="2" fill="#bbb"/>
<rect x="4" y="34" width="4" height="3" fill="#fff"/></svg>
<svg style="position:absolute;left:820.0px;top:218.0px;" width="60" height="58" viewBox="0 0 60 58">
<path d="M0.8 34.4 L9.7 20.5 L9.7 27.3 L5.3 34.4 Z" fill="#7a7a7a"/>
<path d="M59.2 34.4 L50.3 20.5 L50.3 27.3 L54.7 34.4 Z" fill="#7a7a7a"/>
<path d="M12.9 40 L12.9 3.5 Q12.9 1.5 15 1.5 L44.5 1.5 Q46.5 1.5 46.5 3.5 L46.5 40 Z" fill="#fff" stroke="#7a7a7a" stroke-width="2"/>
<path d="M0.8 34.4 L14.5 34.4 Q16 40.4 18.5 40.4 L41.5 40.4 Q44 40.4 45.5 34.4 L59.2 34.4 L59.2 57.5 L0.8 57.5 Z" fill="#7a7a7a"/>
<path d="M32.5 25.5 L52 7" stroke="#4b7cba" stroke-width="5.5"/>
<path d="M53.5 5.5 L56 3" stroke="#4b7cba" stroke-width="5.5" stroke-linecap="round"/>
<path d="M27.5 30.5 L29.5 24 L34 28 Z" fill="#4b7cba"/>
</svg>
<svg style="position:absolute;left:1016.5px;top:218.5px;" width="60" height="60" viewBox="0 0 60 60">
<circle cx="30" cy="30" r="27.5" fill="none" stroke="#777" stroke-width="4"/>
<path d="M44 15 L33.5 33.5 L15 45 L26.5 26.5 Z" fill="#4b7cba"/>
<circle cx="30" cy="30" r="3" fill="#fff"/></svg>
<svg style="position:absolute;left:1200.0px;top:208.0px;" width="90" height="82" viewBox="0 0 90 82"><path d="M22.5 10.8 L43.2 30.4 L64.0 10.8 L72.7 19.6 L52.9 40.3 L72.7 61.0 L64.0 69.5 L43.2 50.0 L22.5 69.5 L13.7 61.0 L33.6 40.3 L13.7 19.6 Z" fill="#c1553b" stroke="#c1553b" stroke-width="1.2" stroke-linejoin="round"/></svg>
<svg style="position:absolute;left:1400.0px;top:210.0px;" width="80" height="80" viewBox="0 0 80 80">
<path d="M10.5 12 Q10.5 8.5 14 8.5 L15.7 8.5 L15.7 60.5 L13 60.5 L13 63.2 L57.5 63.2 L57.5 66 L13.5 66 Q10.5 66 10.5 63 Z" fill="#4b7cba"/>
<rect x="18.8" y="8.5" width="41" height="52" fill="#4b7cba"/>
<path d="M51 46.5 L66 59.5" stroke="#f4f6fa" stroke-width="13"/>
<circle cx="39.9" cy="34.2" r="16" fill="#4b7cba" stroke="#f4f6fa" stroke-width="8.5"/>
<circle cx="39.9" cy="34.2" r="16" fill="none" stroke="#777" stroke-width="3.8"/>
<path d="M51.5 46.5 L65.5 59" stroke="#777" stroke-width="8.5"/>
</svg>
<svg style="position:absolute;left:1606.0px;top:216.5px;" width="60" height="60" viewBox="0 0 60 60">
<rect x="9" y="1" width="14" height="18" fill="#ddd" stroke="#999" stroke-width="1"/>
<rect x="13" y="6" width="6" height="1.5" fill="#888"/><rect x="13" y="10" width="6" height="1.5" fill="#888"/>
<rect x="25" y="1" width="33" height="14" rx="2" fill="#4b7cba"/>
<rect x="28" y="4" width="27" height="8" fill="#fff"/>
<rect x="4" y="15" width="52" height="30" rx="2" fill="#4b7cba"/>
<g fill="#fff">
<rect x="11" y="21" width="9" height="4"/><rect x="23" y="21" width="9" height="4"/><rect x="35" y="21" width="9" height="4"/><rect x="47" y="21" width="6" height="4"/>
<rect x="11" y="28" width="9" height="4"/><rect x="23" y="28" width="9" height="4"/><rect x="35" y="28" width="9" height="4"/>
<rect x="11" y="35" width="9" height="4"/><rect x="23" y="35" width="9" height="4"/><rect x="35" y="35" width="9" height="4"/>
</g>
<rect x="47" y="28" width="7" height="11" fill="#e8b070"/>
<rect x="0" y="46" width="60" height="13" rx="1" fill="#4b7cba"/>
<circle cx="30" cy="52.5" r="4" fill="#fff"/></svg>
<svg style="position:absolute;left:1802.5px;top:218.5px;" width="56" height="60" viewBox="0 0 56 60">
<path d="M2 8 L20 1 L20 59 L2 52 Z" fill="#7a7a7a"/>
<path d="M24 8 L42 8 L42 20 M42 40 L42 52 L24 52" fill="none" stroke="#7a7a7a" stroke-width="3"/>
<path d="M55 30 L34 30 M40 22 L31 30 L40 38" fill="none" stroke="#c9543a" stroke-width="5"/></svg>
<div style="left:357.0px;top:354.5px;width:276.0px;height:888.0px;background:#fff;border:1.5px solid #a7a7a7;border-right:2px solid #c8c8c8;border-bottom:2px solid #c8c8c8;"></div>
<div style="left:360.3px;top:1019.0px;width:269.5px;height:31.5px;background:#3178d4;"></div>
<div class="t" style="left:364.2px;top:363.5px;font-size:24px;line-height:24px;color:#111;letter-spacing:0.73px;">Anagrafica (F5)</div>
<div class="t" style="left:364.2px;top:394.9px;font-size:24px;line-height:24px;color:#111;letter-spacing:1.08px;">Telefono/note (F6)</div>
<div class="t" style="left:364.2px;top:426.4px;font-size:24px;line-height:24px;color:#111;letter-spacing:0.70px;">Pagamenti (F7)</div>
<div class="t" style="left:364.2px;top:457.8px;font-size:24px;line-height:24px;color:#111;letter-spacing:0.81px;">Imposte e fatturazione</div>
<div class="t" style="left:364.2px;top:489.3px;font-size:24px;line-height:24px;color:#111;letter-spacing:0.44px;">Piano dei conti</div>
<div class="t" style="left:364.2px;top:520.7px;font-size:24px;line-height:24px;color:#111;letter-spacing:1.04px;">Trasporto (F8)</div>
<div class="t" style="left:364.2px;top:552.2px;font-size:24px;line-height:24px;color:#111;letter-spacing:0.64px;">Commerciale</div>
<div class="t" style="left:364.2px;top:583.6px;font-size:24px;line-height:24px;color:#111;letter-spacing:0.64px;">Agenti e provvigioni</div>
<div class="t" style="left:364.2px;top:615.1px;font-size:24px;line-height:24px;color:#111;letter-spacing:0.45px;">Destinazioni e sedi</div>
<div class="t" style="left:364.2px;top:646.5px;font-size:24px;line-height:24px;color:#111;letter-spacing:0.95px;">Articoli (F11)</div>
<div class="t" style="left:364.2px;top:678.0px;font-size:24px;line-height:24px;color:#111;letter-spacing:1.44px;">Web</div>
<div class="t" style="left:364.2px;top:709.4px;font-size:24px;line-height:24px;color:#111;letter-spacing:0.46px;">Documenti</div>
<div class="t" style="left:364.2px;top:740.9px;font-size:24px;line-height:24px;color:#111;letter-spacing:0.33px;">Foto</div>
<div class="t" style="left:364.2px;top:772.3px;font-size:24px;line-height:24px;color:#111;letter-spacing:0.75px;">Qualita'</div>
<div class="t" style="left:364.2px;top:803.8px;font-size:24px;line-height:24px;color:#111;letter-spacing:0.71px;">Mailing list</div>
<div class="t" style="left:364.2px;top:835.2px;font-size:24px;line-height:24px;color:#111;letter-spacing:0.76px;">Campi liberi</div>
<div class="t" style="left:364.2px;top:866.7px;font-size:24px;line-height:24px;color:#111;letter-spacing:0.90px;">Informazioni</div>
<div class="t" style="left:364.2px;top:898.1px;font-size:24px;line-height:24px;color:#111;letter-spacing:0.57px;">Operazioni</div>
<div class="t" style="left:364.2px;top:929.6px;font-size:24px;line-height:24px;color:#111;letter-spacing:0.15px;">Privacy</div>
<div class="t" style="left:364.2px;top:961.0px;font-size:24px;line-height:24px;color:#111;letter-spacing:0.68px;">Codici a barre</div>
<div class="t" style="left:364.2px;top:992.5px;font-size:24px;line-height:24px;color:#111;letter-spacing:0.75px;">Movimenti (F3)</div>
<div class="t" style="left:364.2px;top:1023.9px;font-size:24px;line-height:24px;color:#ffffff;letter-spacing:0.73px;">Estratto conto (F10)</div>
<div style="left:640.0px;top:343.0px;width:1720.0px;height:926.0px;background:#f0f0f0;border-bottom-left-radius:0;"></div>
<svg style="position:absolute;left:640.0px;top:355.0px;" width="1720" height="914" viewBox="0 0 1720 914"><path d="M12 1 L7 1 L1 7 L1 906 L7 912 L1712 912 L1718 906 L1718 7 L1712 1 L218 1" fill="none" stroke="#b4b4b4" stroke-width="2"/></svg>
<div class="t" style="left:656.0px;top:346.2px;font-size:22px;line-height:22px;color:#111;letter-spacing:-0.10px;">Estratto conto (F10)</div>
<div style="left:663.5px;top:386.5px;width:25.0px;height:25.0px;border:2px solid #3c4f66;background:linear-gradient(135deg,#dcdcdc,#f7f7f7);"></div>
<div class="t" style="left:693.5px;top:388.4px;font-size:22px;line-height:22px;color:#111;">Dal</div>
<div style="left:750.5px;top:378.5px;width:189.5px;height:41.0px;background:#fff;border:2px solid #a4a4a4;border-bottom-color:#9a9a9a;"></div>
<div class="t" style="left:945.5px;top:388.4px;font-size:22px;line-height:22px;color:#111;">al</div>
<div style="left:974.5px;top:378.5px;width:178.0px;height:41.0px;background:#fff;border:2px solid #a4a4a4;"></div>
<div style="left:1160.5px;top:378.5px;width:43.0px;height:41.0px;background:#ececec;border:1.5px solid #d0d0d0;border-right:2px solid #8a8a8a;border-bottom:2px solid #8a8a8a;"></div>
<svg style="position:absolute;left:1166.0px;top:384.0px;" width="32" height="30" viewBox="0 0 32 30"><rect x="3" y="6" width="26" height="22" fill="#fbfbfb" stroke="#ddd" stroke-width="1"/>
<path d="M4 9 L4 4 Q6 1 10 1 L29 1 L29 6 Z" fill="#d45a4c"/>
<text x="16" y="24" font-family="Liberation Sans" font-weight="bold" font-size="13" fill="#d45a4c" text-anchor="middle">24</text></svg>
<div style="left:663.5px;top:443.0px;width:25.0px;height:25.0px;border:2px solid #3c4f66;background:linear-gradient(135deg,#dcdcdc,#f7f7f7);"></div>
<div class="t" style="left:694.0px;top:445.4px;font-size:22px;line-height:22px;color:#111;letter-spacing:-0.54px;">Visualizza data valuta</div>
<div style="left:663.5px;top:478.5px;width:25.0px;height:25.0px;border:2px solid #3c4f66;background:linear-gradient(135deg,#dcdcdc,#f7f7f7);"></div>
<div class="t" style="left:694.0px;top:480.9px;font-size:22px;line-height:22px;color:#111;letter-spacing:-0.35px;">Vis. saldi clienti provv.</div>
<div style="left:1220.0px;top:376.5px;width:263.0px;height:170.0px;background:#efefef;border-top:2px solid #dcdcdc;border-left:2px solid #dcdcdc;border-right:2.5px solid #9a9a9a;border-bottom:3px solid #9a9a9a;"></div>
<svg style="position:absolute;left:1320.0px;top:414.0px;" width="60" height="62" viewBox="0 0 60 62"><circle cx="34" cy="26.5" r="19.5" fill="#fff" stroke="#4b7cba" stroke-width="6"/><path d="M24 42.5 L6.5 56" stroke="#4b7cba" stroke-width="9" stroke-linecap="round"/></svg>
<div class="t" style="left:1278.2px;top:516.4px;font-size:22px;line-height:22px;color:#111;letter-spacing:-0.48px;">Aggiorna (F10)</div>
<svg style="position:absolute;left:1497.7px;top:375.8px;" width="302.29999999999995" height="169.7" viewBox="0 0 302.29999999999995 169.7"><path d="M11.899999999999864 1 L7 1 L1 7 L1 162.7 L7 168.7 L295.29999999999995 168.7 L301.29999999999995 162.7 L301.29999999999995 7 L295.29999999999995 1 L193.29999999999987 1" fill="none" stroke="#b4b4b4" stroke-width="2"/></svg>
<div class="t" style="left:1513.6px;top:365.8px;font-size:22px;line-height:22px;color:#111;letter-spacing:-0.78px;">Esercizio contabile</div>
<div style="left:1509.0px;top:397.5px;width:280.5px;height:135.5px;background:#fff;border:2px solid #a9a9a9;"></div>
<div style="left:1513.0px;top:401.0px;width:272.5px;height:25.5px;background:#3178d4;"></div>
<div class="t" style="left:1515.0px;top:404.9px;font-size:22px;line-height:22px;color:#fff;letter-spacing:-0.32px;">E/c standard</div>
<div class="t" style="left:1515.0px;top:430.9px;font-size:22px;line-height:22px;color:#111;letter-spacing:-0.60px;">2022 Delta</div>
<div class="t" style="left:1515.0px;top:456.9px;font-size:22px;line-height:22px;color:#111;letter-spacing:-0.60px;">2021 Delta</div>
<svg style="position:absolute;left:1812.0px;top:374.5px;" width="285" height="171.0" viewBox="0 0 285 171.0"><path d="M13.400000000000091 1 L7 1 L1 7 L1 164.0 L7 170.0 L278 170.0 L284 164.0 L284 7 L278 1 L100.40000000000009 1" fill="none" stroke="#b4b4b4" stroke-width="2"/></svg>
<div class="t" style="left:1829.4px;top:364.5px;font-size:22px;line-height:22px;color:#111;letter-spacing:-0.75px;">Azienda</div>
<div style="left:1823.5px;top:398.0px;width:263.0px;height:134.5px;background:#fff;border:2px solid #a9a9a9;"></div>
<div class="t" style="left:1829.5px;top:405.4px;font-size:22px;line-height:22px;color:#111;letter-spacing:-0.25px;">Tutte le aziende</div>
<div style="left:1827.5px;top:427.5px;width:255.0px;height:25.5px;background:#3178d4;"></div>
<div class="t" style="left:1829.5px;top:431.4px;font-size:22px;line-height:22px;color:#fff;letter-spacing:-0.34px;">Delta</div>
<div class="t" style="left:1829.5px;top:457.4px;font-size:22px;line-height:22px;color:#111;transform:scaleX(0.8178);transform-origin:0 0;">SRL</div>
<svg style="position:absolute;left:2106.8px;top:374.5px;" width="236.19999999999982" height="171.29999999999995" viewBox="0 0 236.19999999999982 171.29999999999995"><path d="M12.699999999999818 1 L7 1 L1 7 L1 164.29999999999995 L7 170.29999999999995 L229.19999999999982 170.29999999999995 L235.19999999999982 164.29999999999995 L235.19999999999982 7 L229.19999999999982 1 L82.69999999999982 1" fill="none" stroke="#b4b4b4" stroke-width="2"/></svg>
<div class="t" style="left:2123.5px;top:364.5px;font-size:22px;line-height:22px;color:#111;letter-spacing:-0.55px;">Valuta</div>
<div style="left:2118.5px;top:398.0px;width:214.0px;height:134.5px;background:#fff;border:2px solid #a9a9a9;"></div>
<div style="left:2122.5px;top:401.5px;width:206.0px;height:25.5px;background:#3178d4;"></div>
<div class="t" style="left:2124.5px;top:405.4px;font-size:22px;line-height:22px;color:#fff;">€</div>
<div style="left:655.5px;top:557.0px;width:1688.0px;height:600.5px;background:#ababab;border-top:2px solid #c4c4c4;border-left:2px solid #c4c4c4;"></div>
<div style="left:657.5px;top:559.0px;width:1635.0px;height:31.0px;background:linear-gradient(#e6e6e6,#dedede);border-bottom:2px solid #c6c6c6;"></div>
<div style="left:787.5px;top:559.0px;width:2.0px;height:31.0px;background:#c2c2c2;"></div>
<div style="left:1556.0px;top:559.0px;width:2.0px;height:31.0px;background:#c2c2c2;"></div>
<div style="left:1713.0px;top:559.0px;width:2.0px;height:31.0px;background:#c2c2c2;"></div>
<div style="left:1870.5px;top:559.0px;width:2.0px;height:31.0px;background:#c2c2c2;"></div>
<div style="left:2028.0px;top:559.0px;width:2.0px;height:31.0px;background:#c2c2c2;"></div>
<div style="left:2160.0px;top:559.0px;width:2.0px;height:31.0px;background:#c2c2c2;"></div>
<div style="left:789.5px;top:561.0px;width:2.0px;height:27.0px;background:#f6f6f6;"></div>
<div class="t" style="left:691.5px;top:564.9px;font-size:22px;line-height:22px;color:#111;letter-spacing:-0.19px;">Data reg.</div>
<div class="t" style="left:794.6px;top:564.9px;font-size:22px;line-height:22px;color:#111;letter-spacing:-1.09px;">Descrizione</div>
<div class="t" style="left:1562.6px;top:564.9px;font-size:22px;line-height:22px;color:#111;transform:scaleX(0.8671);transform-origin:0 0;">DARE</div>
<div class="t" style="left:1720.0px;top:564.9px;font-size:22px;line-height:22px;color:#111;transform:scaleX(0.8581);transform-origin:0 0;">AVERE</div>
<div class="t" style="left:1877.0px;top:564.9px;font-size:22px;line-height:22px;color:#111;transform:scaleX(0.8648);transform-origin:0 0;">SALDO</div>
<div class="t" style="left:2034.6px;top:564.9px;font-size:22px;line-height:22px;color:#111;letter-spacing:-0.58px;">N.doc.</div>
<div class="t" style="left:2166.7px;top:564.9px;font-size:22px;line-height:22px;color:#111;letter-spacing:-0.50px;">Data doc.</div>
<div style="left:788.5px;top:590.0px;width:1504.0px;height:32.0px;background:#ffffff;"></div>
<div style="left:657.5px;top:590.0px;width:131.0px;height:32.0px;background:#e3e3e3;border-top:1px solid #f2f2f2;border-left:1px solid #f2f2f2;border-bottom:2px solid #b9b9b9;border-right:1px solid #c9c9c9;"></div>
<div style="left:1556.0px;top:590.0px;width:2.0px;height:32.0px;background:#d2d2d2;"></div>
<div style="left:1713.0px;top:590.0px;width:2.0px;height:32.0px;background:#d2d2d2;"></div>
<div style="left:1870.5px;top:590.0px;width:2.0px;height:32.0px;background:#d2d2d2;"></div>
<div style="left:2028.0px;top:590.0px;width:2.0px;height:32.0px;background:#d2d2d2;"></div>
<div style="left:2160.0px;top:590.0px;width:2.0px;height:32.0px;background:#d2d2d2;"></div>
<div class="t" style="left:674.8px;top:595.7px;font-size:22px;line-height:22px;color:#111;letter-spacing:-0.18px;">12/01/2021</div>
<div class="t" style="left:793.4px;top:595.7px;font-size:22px;line-height:22px;color:#111;letter-spacing:-0.22px;">Documento di trasporto N. 3 del 12/01/2021</div>
<div class="t" style="left:1640.7px;top:595.7px;font-size:22px;line-height:22px;color:#111;">244,00</div>
<div class="t" style="left:1955.5px;top:595.7px;font-size:22px;line-height:22px;color:#111;">244,00</div>
<div class="t" style="left:2143.8px;top:595.7px;font-size:22px;line-height:22px;color:#111;">3</div>
<div class="t" style="left:2178.8px;top:595.7px;font-size:22px;line-height:22px;color:#111;letter-spacing:-0.07px;">12/01/2021</div>
<div style="left:788.5px;top:622.0px;width:1504.0px;height:31.0px;background:#efefef;"></div>
<div style="left:657.5px;top:622.0px;width:131.0px;height:31.0px;background:#e3e3e3;border-top:1px solid #f2f2f2;border-left:1px solid #f2f2f2;border-bottom:2px solid #b9b9b9;border-right:1px solid #c9c9c9;"></div>
<div style="left:1556.0px;top:622.0px;width:2.0px;height:31.0px;background:#d2d2d2;"></div>
<div style="left:1713.0px;top:622.0px;width:2.0px;height:31.0px;background:#d2d2d2;"></div>
<div style="left:1870.5px;top:622.0px;width:2.0px;height:31.0px;background:#d2d2d2;"></div>
<div style="left:2028.0px;top:622.0px;width:2.0px;height:31.0px;background:#d2d2d2;"></div>
<div style="left:2160.0px;top:622.0px;width:2.0px;height:31.0px;background:#d2d2d2;"></div>
<div class="t" style="left:674.8px;top:627.7px;font-size:22px;line-height:22px;color:#111;letter-spacing:-0.18px;">04/02/2021</div>
<div class="t" style="left:793.4px;top:627.7px;font-size:22px;line-height:22px;color:#111;letter-spacing:-0.32px;">Ricevuta di cassa N. 3 del 04/02/2021</div>
<div class="t" style="left:1665.2px;top:627.7px;font-size:22px;line-height:22px;color:#111;">6,00</div>
<div class="t" style="left:1955.5px;top:627.7px;font-size:22px;line-height:22px;color:#111;">250,00</div>
<div class="t" style="left:2143.8px;top:627.7px;font-size:22px;line-height:22px;color:#111;">3</div>
<div class="t" style="left:2178.8px;top:627.7px;font-size:22px;line-height:22px;color:#111;letter-spacing:-0.07px;">04/02/2021</div>
<div style="left:788.5px;top:653.0px;width:1504.0px;height:31.0px;background:#ffffff;"></div>
<div style="left:657.5px;top:653.0px;width:131.0px;height:31.0px;background:#e3e3e3;border-top:1px solid #f2f2f2;border-left:1px solid #f2f2f2;border-bottom:2px solid #b9b9b9;border-right:1px solid #c9c9c9;"></div>
<div style="left:1556.0px;top:653.0px;width:2.0px;height:31.0px;background:#d2d2d2;"></div>
<div style="left:1713.0px;top:653.0px;width:2.0px;height:31.0px;background:#d2d2d2;"></div>
<div style="left:1870.5px;top:653.0px;width:2.0px;height:31.0px;background:#d2d2d2;"></div>
<div style="left:2028.0px;top:653.0px;width:2.0px;height:31.0px;background:#d2d2d2;"></div>
<div style="left:2160.0px;top:653.0px;width:2.0px;height:31.0px;background:#d2d2d2;"></div>
<div class="t" style="left:674.8px;top:658.7px;font-size:22px;line-height:22px;color:#111;letter-spacing:-0.18px;">12/05/2021</div>
<div class="t" style="left:793.4px;top:658.7px;font-size:22px;line-height:22px;color:#111;letter-spacing:-0.34px;">Documento non fiscale N. 3 del 12/05/2021</div>
<div class="t" style="left:1640.7px;top:658.7px;font-size:22px;line-height:22px;color:#111;">378,20</div>
<div class="t" style="left:1955.5px;top:658.7px;font-size:22px;line-height:22px;color:#111;">628,20</div>
<div class="t" style="left:2143.8px;top:658.7px;font-size:22px;line-height:22px;color:#111;">3</div>
<div class="t" style="left:2178.8px;top:658.7px;font-size:22px;line-height:22px;color:#111;letter-spacing:-0.07px;">12/05/2021</div>
<div style="left:788.5px;top:684.0px;width:1504.0px;height:32.0px;background:#efefef;"></div>
<div style="left:657.5px;top:684.0px;width:131.0px;height:32.0px;background:#e3e3e3;border-top:1px solid #f2f2f2;border-left:1px solid #f2f2f2;border-bottom:2px solid #b9b9b9;border-right:1px solid #c9c9c9;"></div>
<div style="left:1556.0px;top:684.0px;width:2.0px;height:32.0px;background:#d2d2d2;"></div>
<div style="left:1713.0px;top:684.0px;width:2.0px;height:32.0px;background:#d2d2d2;"></div>
<div style="left:1870.5px;top:684.0px;width:2.0px;height:32.0px;background:#d2d2d2;"></div>
<div style="left:2028.0px;top:684.0px;width:2.0px;height:32.0px;background:#d2d2d2;"></div>
<div style="left:2160.0px;top:684.0px;width:2.0px;height:32.0px;background:#d2d2d2;"></div>
<div class="t" style="left:674.8px;top:689.7px;font-size:22px;line-height:22px;color:#111;letter-spacing:-0.18px;">12/05/2021</div>
<div class="t" style="left:793.4px;top:689.7px;font-size:22px;line-height:22px;color:#111;letter-spacing:-0.34px;">Documento non fiscale N. 4 del 12/05/2021</div>
<div class="t" style="left:1640.7px;top:689.7px;font-size:22px;line-height:22px;color:#111;">744,20</div>
<div class="t" style="left:1939.1px;top:689.7px;font-size:22px;line-height:22px;color:#111;">1'372,40</div>
<div class="t" style="left:2143.8px;top:689.7px;font-size:22px;line-height:22px;color:#111;">4</div>
<div class="t" style="left:2178.8px;top:689.7px;font-size:22px;line-height:22px;color:#111;letter-spacing:-0.07px;">12/05/2021</div>
<div style="left:788.5px;top:716.0px;width:1504.0px;height:32.0px;background:#ffffff;"></div>
<div style="left:657.5px;top:716.0px;width:131.0px;height:32.0px;background:#e3e3e3;border-top:1px solid #f2f2f2;border-left:1px solid #f2f2f2;border-bottom:2px solid #b9b9b9;border-right:1px solid #c9c9c9;"></div>
<div style="left:1556.0px;top:716.0px;width:2.0px;height:32.0px;background:#d2d2d2;"></div>
<div style="left:1713.0px;top:716.0px;width:2.0px;height:32.0px;background:#d2d2d2;"></div>
<div style="left:1870.5px;top:716.0px;width:2.0px;height:32.0px;background:#d2d2d2;"></div>
<div style="left:2028.0px;top:716.0px;width:2.0px;height:32.0px;background:#d2d2d2;"></div>
<div style="left:2160.0px;top:716.0px;width:2.0px;height:32.0px;background:#d2d2d2;"></div>
<div class="t" style="left:674.8px;top:721.7px;font-size:22px;line-height:22px;color:#111;letter-spacing:-0.18px;">17/05/2021</div>
<div class="t" style="left:793.4px;top:721.7px;font-size:22px;line-height:22px;color:#111;letter-spacing:-0.34px;">Documento non fiscale N. 5 del 17/05/2021</div>
<div class="t" style="left:1640.7px;top:721.7px;font-size:22px;line-height:22px;color:#111;">744,20</div>
<div class="t" style="left:1940.7px;top:721.7px;font-size:22px;line-height:22px;color:#111;">2'116,60</div>
<div class="t" style="left:2143.8px;top:721.7px;font-size:22px;line-height:22px;color:#111;">5</div>
<div class="t" style="left:2178.8px;top:721.7px;font-size:22px;line-height:22px;color:#111;letter-spacing:-0.07px;">17/05/2021</div>
<div style="left:788.5px;top:748.0px;width:1504.0px;height:31.0px;background:#efefef;"></div>
<div style="left:657.5px;top:748.0px;width:131.0px;height:31.0px;background:#e3e3e3;border-top:1px solid #f2f2f2;border-left:1px solid #f2f2f2;border-bottom:2px solid #b9b9b9;border-right:1px solid #c9c9c9;"></div>
<div style="left:661.0px;top:751.0px;width:125.0px;height:24.5px;background:#b6f0f4;"></div>
<div style="left:1556.0px;top:748.0px;width:2.0px;height:31.0px;background:#d2d2d2;"></div>
<div style="left:1713.0px;top:748.0px;width:2.0px;height:31.0px;background:#d2d2d2;"></div>
<div style="left:1870.5px;top:748.0px;width:2.0px;height:31.0px;background:#d2d2d2;"></div>
<div style="left:2028.0px;top:748.0px;width:2.0px;height:31.0px;background:#d2d2d2;"></div>
<div style="left:2160.0px;top:748.0px;width:2.0px;height:31.0px;background:#d2d2d2;"></div>
<div class="t" style="left:674.8px;top:753.7px;font-size:22px;line-height:22px;color:#111;letter-spacing:-0.18px;">27/05/2021</div>
<div class="t" style="left:793.4px;top:753.7px;font-size:22px;line-height:22px;color:#111;letter-spacing:-0.22px;">Documento di trasporto N. 5 del 27/05/2021</div>
<div class="t" style="left:1645.6px;top:753.7px;font-size:22px;line-height:22px;color:#111;">-12,00</div>
<div class="t" style="left:1939.1px;top:753.7px;font-size:22px;line-height:22px;color:#111;">2'104,60</div>
<div class="t" style="left:2143.8px;top:753.7px;font-size:22px;line-height:22px;color:#111;">5</div>
<div class="t" style="left:2178.8px;top:753.7px;font-size:22px;line-height:22px;color:#111;letter-spacing:-0.07px;">27/05/2021</div>
<div style="left:788.5px;top:779.0px;width:1504.0px;height:31.0px;background:#ffffff;"></div>
<div style="left:657.5px;top:779.0px;width:131.0px;height:31.0px;background:#e3e3e3;border-top:1px solid #f2f2f2;border-left:1px solid #f2f2f2;border-bottom:2px solid #b9b9b9;border-right:1px solid #c9c9c9;"></div>
<div style="left:1556.0px;top:779.0px;width:2.0px;height:31.0px;background:#d2d2d2;"></div>
<div style="left:1713.0px;top:779.0px;width:2.0px;height:31.0px;background:#d2d2d2;"></div>
<div style="left:1870.5px;top:779.0px;width:2.0px;height:31.0px;background:#d2d2d2;"></div>
<div style="left:2028.0px;top:779.0px;width:2.0px;height:31.0px;background:#d2d2d2;"></div>
<div style="left:2160.0px;top:779.0px;width:2.0px;height:31.0px;background:#d2d2d2;"></div>
<div class="t" style="left:674.8px;top:784.7px;font-size:22px;line-height:22px;color:#111;letter-spacing:-0.18px;">09/09/2021</div>
<div class="t" style="left:793.4px;top:784.7px;font-size:22px;line-height:22px;color:#111;letter-spacing:-0.21px;">Fattura accompagnatoria N. 3 del 09/09/2021</div>
<div class="t" style="left:1652.9px;top:784.7px;font-size:22px;line-height:22px;color:#111;">70,00</div>
<div class="t" style="left:1939.1px;top:784.7px;font-size:22px;line-height:22px;color:#111;">2'174,60</div>
<div class="t" style="left:2143.8px;top:784.7px;font-size:22px;line-height:22px;color:#111;">3</div>
<div class="t" style="left:2178.8px;top:784.7px;font-size:22px;line-height:22px;color:#111;letter-spacing:-0.07px;">09/09/2021</div>
<div style="left:788.5px;top:810.0px;width:1504.0px;height:32.0px;background:#efefef;"></div>
<div style="left:657.5px;top:810.0px;width:131.0px;height:32.0px;background:#e3e3e3;border-top:1px solid #f2f2f2;border-left:1px solid #f2f2f2;border-bottom:2px solid #b9b9b9;border-right:1px solid #c9c9c9;"></div>
<div style="left:1556.0px;top:810.0px;width:2.0px;height:32.0px;background:#d2d2d2;"></div>
<div style="left:1713.0px;top:810.0px;width:2.0px;height:32.0px;background:#d2d2d2;"></div>
<div style="left:1870.5px;top:810.0px;width:2.0px;height:32.0px;background:#d2d2d2;"></div>
<div style="left:2028.0px;top:810.0px;width:2.0px;height:32.0px;background:#d2d2d2;"></div>
<div style="left:2160.0px;top:810.0px;width:2.0px;height:32.0px;background:#d2d2d2;"></div>
<div class="t" style="left:674.8px;top:815.7px;font-size:22px;line-height:22px;color:#111;letter-spacing:-0.18px;">09/09/2021</div>
<div class="t" style="left:793.4px;top:815.7px;font-size:22px;line-height:22px;color:#111;letter-spacing:-0.65px;">Movimento di cassa</div>
<div class="t" style="left:1809.9px;top:815.7px;font-size:22px;line-height:22px;color:#111;">70,00</div>
<div class="t" style="left:1939.1px;top:815.7px;font-size:22px;line-height:22px;color:#111;">2'104,60</div>
<div class="t" style="left:2143.8px;top:815.7px;font-size:22px;line-height:22px;color:#111;">3</div>
<div class="t" style="left:2178.8px;top:815.7px;font-size:22px;line-height:22px;color:#111;letter-spacing:-0.07px;">09/09/2021</div>
<div style="left:788.5px;top:842.0px;width:1504.0px;height:32.0px;background:#ffffff;"></div>
<div style="left:657.5px;top:842.0px;width:131.0px;height:32.0px;background:#e3e3e3;border-top:1px solid #f2f2f2;border-left:1px solid #f2f2f2;border-bottom:2px solid #b9b9b9;border-right:1px solid #c9c9c9;"></div>
<div style="left:1556.0px;top:842.0px;width:2.0px;height:32.0px;background:#d2d2d2;"></div>
<div style="left:1713.0px;top:842.0px;width:2.0px;height:32.0px;background:#d2d2d2;"></div>
<div style="left:1870.5px;top:842.0px;width:2.0px;height:32.0px;background:#d2d2d2;"></div>
<div style="left:2028.0px;top:842.0px;width:2.0px;height:32.0px;background:#d2d2d2;"></div>
<div style="left:2160.0px;top:842.0px;width:2.0px;height:32.0px;background:#d2d2d2;"></div>
<div class="t" style="left:674.8px;top:847.7px;font-size:22px;line-height:22px;color:#111;letter-spacing:-0.18px;">31/01/2022</div>
<div class="t" style="left:793.4px;top:847.7px;font-size:22px;line-height:22px;color:#111;letter-spacing:-0.14px;">Pagamento a fornitore (contanti)</div>
<div class="t" style="left:1652.9px;top:847.7px;font-size:22px;line-height:22px;color:#111;">24,40</div>
<div class="t" style="left:1939.1px;top:847.7px;font-size:22px;line-height:22px;color:#111;">2'129,00</div>
<div class="t" style="left:2143.8px;top:847.7px;font-size:22px;line-height:22px;color:#111;">2</div>
<div class="t" style="left:2178.8px;top:847.7px;font-size:22px;line-height:22px;color:#111;letter-spacing:-0.07px;">03/02/2022</div>
<div style="left:788.5px;top:874.0px;width:1504.0px;height:31.0px;background:#efefef;"></div>
<div style="left:657.5px;top:874.0px;width:131.0px;height:31.0px;background:#e3e3e3;border-top:1px solid #f2f2f2;border-left:1px solid #f2f2f2;border-bottom:2px solid #b9b9b9;border-right:1px solid #c9c9c9;"></div>
<div style="left:1556.0px;top:874.0px;width:2.0px;height:31.0px;background:#d2d2d2;"></div>
<div style="left:1713.0px;top:874.0px;width:2.0px;height:31.0px;background:#d2d2d2;"></div>
<div style="left:1870.5px;top:874.0px;width:2.0px;height:31.0px;background:#d2d2d2;"></div>
<div style="left:2028.0px;top:874.0px;width:2.0px;height:31.0px;background:#d2d2d2;"></div>
<div style="left:2160.0px;top:874.0px;width:2.0px;height:31.0px;background:#d2d2d2;"></div>
<div class="t" style="left:674.8px;top:879.7px;font-size:22px;line-height:22px;color:#111;letter-spacing:-0.18px;">03/02/2022</div>
<div class="t" style="left:793.4px;top:879.7px;font-size:22px;line-height:22px;color:#111;letter-spacing:-0.40px;">DDT carico N. 2 del 03/02/2022</div>
<div class="t" style="left:1809.9px;top:879.7px;font-size:22px;line-height:22px;color:#111;">24,40</div>
<div class="t" style="left:1939.1px;top:879.7px;font-size:22px;line-height:22px;color:#111;">2'104,60</div>
<div class="t" style="left:2143.8px;top:879.7px;font-size:22px;line-height:22px;color:#111;">2</div>
<div class="t" style="left:2178.8px;top:879.7px;font-size:22px;line-height:22px;color:#111;letter-spacing:-0.07px;">03/02/2022</div>
<div style="left:788.5px;top:905.0px;width:1504.0px;height:31.0px;background:#ffffff;"></div>
<div style="left:657.5px;top:905.0px;width:131.0px;height:31.0px;background:#e3e3e3;border-top:1px solid #f2f2f2;border-left:1px solid #f2f2f2;border-bottom:2px solid #b9b9b9;border-right:1px solid #c9c9c9;"></div>
<div style="left:1556.0px;top:905.0px;width:2.0px;height:31.0px;background:#d2d2d2;"></div>
<div style="left:1713.0px;top:905.0px;width:2.0px;height:31.0px;background:#d2d2d2;"></div>
<div style="left:1870.5px;top:905.0px;width:2.0px;height:31.0px;background:#d2d2d2;"></div>
<div style="left:2028.0px;top:905.0px;width:2.0px;height:31.0px;background:#d2d2d2;"></div>
<div style="left:2160.0px;top:905.0px;width:2.0px;height:31.0px;background:#d2d2d2;"></div>
<div class="t" style="left:674.8px;top:910.7px;font-size:22px;line-height:22px;color:#111;letter-spacing:-0.18px;">01/04/2022</div>
<div class="t" style="left:793.4px;top:910.7px;font-size:22px;line-height:22px;color:#111;letter-spacing:-0.23px;">Incasso da cliente (contanti)</div>
<div class="t" style="left:1797.7px;top:910.7px;font-size:22px;line-height:22px;color:#111;">100,00</div>
<div class="t" style="left:1939.1px;top:910.7px;font-size:22px;line-height:22px;color:#111;">2'004,60</div>
<div class="t" style="left:2143.8px;top:910.7px;font-size:22px;line-height:22px;color:#111;">5</div>
<div class="t" style="left:2178.8px;top:910.7px;font-size:22px;line-height:22px;color:#111;letter-spacing:-0.07px;">17/05/2021</div>
<div style="left:788.5px;top:936.0px;width:1504.0px;height:32.0px;background:#76f550;"></div>
<div style="left:657.5px;top:936.0px;width:131.0px;height:32.0px;background:#e3e3e3;border-top:1px solid #f2f2f2;border-left:1px solid #f2f2f2;border-bottom:2px solid #b9b9b9;border-right:1px solid #c9c9c9;"></div>
<div style="left:1556.0px;top:936.0px;width:2.0px;height:32.0px;background:#d2d2d2;"></div>
<div style="left:1713.0px;top:936.0px;width:2.0px;height:32.0px;background:#d2d2d2;"></div>
<div style="left:1870.5px;top:936.0px;width:2.0px;height:32.0px;background:#d2d2d2;"></div>
<div style="left:2028.0px;top:936.0px;width:2.0px;height:32.0px;background:#d2d2d2;"></div>
<div style="left:2160.0px;top:936.0px;width:2.0px;height:32.0px;background:#d2d2d2;"></div>
<div class="t" style="left:674.8px;top:941.7px;font-size:22px;line-height:22px;color:#111;">11/04/2022</div>
<div class="t" style="left:793.4px;top:941.7px;font-size:22px;line-height:22px;color:#111;letter-spacing:0.09px;">Fattura differita N. 4 del 11/04/2022</div>
<div class="t" style="left:1642.3px;top:941.7px;font-size:22px;line-height:22px;color:#111;">110,00</div>
<div class="t" style="left:1940.7px;top:941.7px;font-size:22px;line-height:22px;color:#111;">2'114,60</div>
<div class="t" style="left:2143.8px;top:941.7px;font-size:22px;line-height:22px;color:#111;">4</div>
<div class="t" style="left:2178.8px;top:941.7px;font-size:22px;line-height:22px;color:#111;letter-spacing:0.11px;">11/04/2022</div>
<div style="left:788.5px;top:968.0px;width:1504.0px;height:32.0px;background:#ffffff;"></div>
<div style="left:657.5px;top:968.0px;width:131.0px;height:32.0px;background:#e3e3e3;border-top:1px solid #f2f2f2;border-left:1px solid #f2f2f2;border-bottom:2px solid #b9b9b9;border-right:1px solid #c9c9c9;"></div>
<div style="left:1556.0px;top:968.0px;width:2.0px;height:32.0px;background:#d2d2d2;"></div>
<div style="left:1713.0px;top:968.0px;width:2.0px;height:32.0px;background:#d2d2d2;"></div>
<div style="left:1870.5px;top:968.0px;width:2.0px;height:32.0px;background:#d2d2d2;"></div>
<div style="left:2028.0px;top:968.0px;width:2.0px;height:32.0px;background:#d2d2d2;"></div>
<div style="left:2160.0px;top:968.0px;width:2.0px;height:32.0px;background:#d2d2d2;"></div>
<div class="t" style="left:1624.3px;top:973.7px;font-size:22px;line-height:22px;color:#111;">2'309,00</div>
<div class="t" style="left:1797.7px;top:973.7px;font-size:22px;line-height:22px;color:#111;">194,40</div>
<div class="t" style="left:1940.7px;top:973.7px;font-size:22px;line-height:22px;color:#111;">2'114,60</div>
<svg style="position:absolute;left:788.5px;top:747.5px;" width="768.5" height="31.5" viewBox="0 0 768.5 31.5"><rect x="1.5" y="1.8" width="765.5" height="27.9" fill="none" stroke="#333" stroke-width="2.4" stroke-dasharray="2 1.6"/></svg>
<div style="left:657.3px;top:1170.5px;width:297.7px;height:82.0px;background:#efefef;border-top:2px solid #dcdcdc;border-left:2px solid #dcdcdc;border-right:2.5px solid #9a9a9a;border-bottom:3px solid #9a9a9a;"></div>
<div class="t" style="left:747.0px;top:1200.4px;font-size:22px;line-height:22px;color:#111;letter-spacing:-0.63px;">Visualizza dettaglio</div>
<svg style="position:absolute;left:663.5px;top:1186.0px;" width="46" height="46" viewBox="0 0 46 46"><path d="M1 1 L26 1 L32 7 L32 42 L1 42 Z" fill="#fff" stroke="#9a9a9a" stroke-width="1.2"/>
<path d="M26 1 L26 7 L32 7" fill="none" stroke="#9a9a9a" stroke-width="1.2"/>
<circle cx="24" cy="26" r="8" fill="none" stroke="#4b7cba" stroke-width="3.5"/>
<path d="M30 32 L37 39" stroke="#4b7cba" stroke-width="4" stroke-linecap="round"/></svg>
<div style="left:967.0px;top:1170.5px;width:299.0px;height:82.0px;background:#efefef;border-top:2px solid #dcdcdc;border-left:2px solid #dcdcdc;border-right:2.5px solid #9a9a9a;border-bottom:3px solid #9a9a9a;"></div>
<div class="t" style="left:1110.0px;top:1200.4px;font-size:22px;line-height:22px;color:#111;letter-spacing:-0.96px;">Stampa</div>
<svg style="position:absolute;left:972.0px;top:1185.0px;" width="46" height="44" viewBox="0 0 46 44"><rect x="11" y="1" width="24" height="11" fill="#fff" stroke="#7a7a7a" stroke-width="2"/>
<rect x="0" y="10" width="46" height="22" rx="3" fill="#7a7a7a"/>
<rect x="7" y="10" width="32" height="11" rx="1" fill="#4b7cba" stroke="#fff" stroke-width="1.2"/>
<rect x="11" y="25" width="24" height="18" fill="#fff" stroke="#7a7a7a" stroke-width="2"/>
<rect x="14" y="31" width="18" height="2" fill="#bbb"/><rect x="14" y="36" width="18" height="2" fill="#bbb"/></svg>
<div style="left:1278.6px;top:1170.5px;width:298.4px;height:82.0px;background:#efefef;border-top:2px solid #dcdcdc;border-left:2px solid #dcdcdc;border-right:2.5px solid #9a9a9a;border-bottom:3px solid #9a9a9a;"></div>
<div class="t" style="left:1368.0px;top:1200.4px;font-size:22px;line-height:22px;color:#111;letter-spacing:-0.84px;">Visualizza mastrino</div>
<svg style="position:absolute;left:1285.0px;top:1186.0px;" width="46" height="46" viewBox="0 0 46 46"><path d="M1 1 L26 1 L32 7 L32 42 L1 42 Z" fill="#fff" stroke="#9a9a9a" stroke-width="1.2"/>
<path d="M26 1 L26 7 L32 7" fill="none" stroke="#9a9a9a" stroke-width="1.2"/>
<circle cx="24" cy="26" r="8" fill="none" stroke="#4b7cba" stroke-width="3.5"/>
<path d="M30 32 L37 39" stroke="#4b7cba" stroke-width="4" stroke-linecap="round"/></svg>
<div style="left:343.0px;top:1297.0px;width:2040.0px;height:49.0px;background:#dcdcdc;"></div>
<div style="left:349.4px;top:1301.0px;width:619.6px;height:43.0px;border-top:1.5px solid #c4c4c4;border-left:1.5px solid #c4c4c4;border-right:1.5px solid #f4f4f4;border-bottom:1.5px solid #f4f4f4;"></div>
<div style="left:975.0px;top:1301.0px;width:526.0px;height:43.0px;border-top:1.5px solid #c4c4c4;border-left:1.5px solid #c4c4c4;border-right:1.5px solid #f4f4f4;border-bottom:1.5px solid #f4f4f4;"></div>
<div style="left:1508.0px;top:1301.0px;width:526.0px;height:43.0px;border-top:1.5px solid #c4c4c4;border-left:1.5px solid #c4c4c4;border-right:1.5px solid #f4f4f4;border-bottom:1.5px solid #f4f4f4;"></div>
<div style="left:2041.5px;top:1301.0px;width:177.5px;height:43.0px;border-top:1.5px solid #c4c4c4;border-left:1.5px solid #c4c4c4;border-right:1.5px solid #f4f4f4;border-bottom:1.5px solid #f4f4f4;"></div>
<div style="left:2224.8px;top:1301.0px;width:114.0px;height:43.0px;border-top:1.5px solid #c4c4c4;border-left:1.5px solid #c4c4c4;border-right:1.5px solid #f4f4f4;border-bottom:1.5px solid #f4f4f4;"></div>
<div class="t" style="left:356.0px;top:1312.5px;font-size:23px;line-height:23px;color:#111;font-weight:700;-webkit-text-stroke:0.1px currentColor;letter-spacing:0.70px;">Creazione : 27/10/2020 - Ultima modifica : 09/11/2022</div>
<div class="t" style="left:1164.0px;top:1312.5px;font-size:23px;line-height:23px;color:#111;font-weight:700;-webkit-text-stroke:0.1px currentColor;letter-spacing:0.56px;">Delta Spa (1)</div>
<div class="t" style="left:1665.0px;top:1312.5px;font-size:23px;line-height:23px;color:#111;font-weight:700;-webkit-text-stroke:0.1px currentColor;letter-spacing:0.14px;">Ready Pro 2022.9.9</div>
<div class="t" style="left:2063.0px;top:1312.5px;font-size:23px;line-height:23px;color:#111;font-weight:700;-webkit-text-stroke:0.1px currentColor;letter-spacing:2.24px;">14/11/2022</div>
<div class="t" style="left:2252.5px;top:1312.5px;font-size:23px;line-height:23px;color:#111;font-weight:700;-webkit-text-stroke:0.1px currentColor;letter-spacing:0.36px;">11:59</div>
<svg style="position:absolute;left:2345.0px;top:1318.0px;" width="14" height="14" viewBox="0 0 14 14"><rect x="9" y="0" width="3" height="3" fill="#fff"/><rect x="9" y="8" width="3" height="3" fill="#fff"/><rect x="1" y="8" width="3" height="3" fill="#fff"/><rect x="8" y="-1" width="2" height="2" fill="#bbb"/></svg>
<svg style="position:absolute;left:1470.0px;top:280.0px;" width="680" height="250" viewBox="0 0 680 250">
<rect x="18" y="63" width="257" height="164" rx="25" ry="25" fill="none" stroke="#e63e27" stroke-width="10"/>
<path d="M652 13 L350 80" stroke="#e63e27" stroke-width="10.5" stroke-linecap="butt"/>
<path d="M304 83 L348 49 L360 97 Z" fill="#e63e27"/>
</svg>
</body></html>
